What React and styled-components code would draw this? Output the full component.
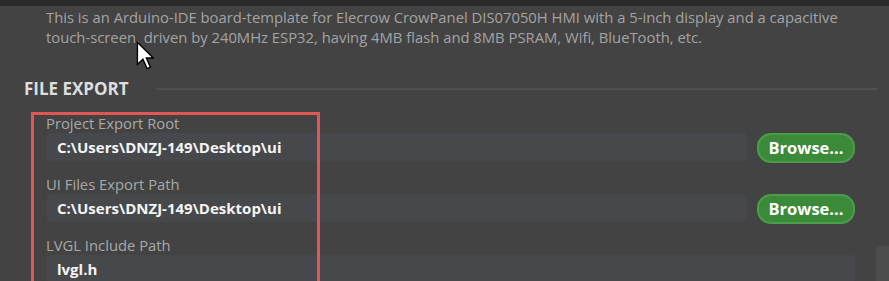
import React from 'react';
import styled, { createGlobalStyle } from 'styled-components';

const fields = [
    { label: 'Project Export Root', value: 'C:\\Users\\DNZJ-149\\Desktop\\ui', browse: true },
    { label: 'UI Files Export Path', value: 'C:\\Users\\DNZJ-149\\Desktop\\ui', browse: true },
    { label: 'LVGL Include Path', value: 'lvgl.h', browse: false }
]

const App = () => {
    return (
        <Page>
            <GlobalStyle />
            <TopBar />
            <Content>
                <Description>
                    This is an Arduino-IDE board-template for Elecrow CrowPanel DIS07050H HMI with a 5-inch display and a capacitive
                    <br />
                    touch-screen, driven by 240MHz ESP32, having 4MB flash and 8MB PSRAM, Wifi, BlueTooth, etc.
                </Description>
                <SectionHeader>
                    <SectionTitle>FILE EXPORT</SectionTitle>
                    <Rule />
                </SectionHeader>
                <Fields>
                    {fields.map(f => (
                        <Field key={f.label}>
                            <Label>{f.label}</Label>
                            <Row>
                                <PathInput>{f.value}</PathInput>
                                {f.browse && <Button>Browse...</Button>}
                            </Row>
                        </Field>
                    ))}
                    <Highlight />
                </Fields>
            </Content>
            <Scrollbar />
            <Cursor viewBox="0 0 13 21">
                <path d="M1 1 L1 17 L5 13.2 L8 20 L10.4 19 L7.5 12.3 L12.5 12.3 Z" fill="#fff" stroke="#000" strokeWidth="1" strokeLinejoin="miter" />
            </Cursor>
        </Page>
    )
}

const GlobalStyle = createGlobalStyle`
    body {
        margin: 0;
        background: #434343;
        overflow: hidden;
        font-family: 'Open Sans', 'Noto Sans', sans-serif;
    }
`;

const Page = styled.div`
    position: relative;
    width: 889px;
    height: 281px;
    overflow: hidden;
    background: #434343;
`;

const TopBar = styled.div`
    height: 6px;
    background: #2a2a2a;
`;

const Content = styled.div`
    padding: 1px 34px 0 24px;
`;

const Description = styled.p`
    margin: 0 0 0 22px;
    font-size: 14.8px;
    line-height: 20px;
    color: #a3a3a3;
    white-space: nowrap;
`;

const SectionHeader = styled.div`
    display: flex;
    align-items: center;
    gap: 27px;
    margin: 32px -22px 0 0;
    height: 20px;
`;

const SectionTitle = styled.div`
    font-size: 17px;
    font-weight: 700;
    color: #dedede;
    line-height: 20px;
`;

const Rule = styled.div`
    flex: 1;
    height: 2px;
    background: #505050;
`;

const Fields = styled.div`
    position: relative;
    display: flex;
    flex-direction: column;
    gap: 11px;
    margin: 14px 0 0 22px;
`;

const Field = styled.div`
    display: flex;
    flex-direction: column;
`;

const Label = styled.div`
    font-size: 14.8px;
    line-height: 20px;
    color: #a8a8a8;
`;

const Row = styled.div`
    display: flex;
    gap: 10px;
    margin-left: 1px;
`;

const PathInput = styled.div`
    flex: 1;
    height: 28px;
    line-height: 28px;
    padding-left: 10px;
    border-radius: 4px;
    background: #47484c;
    color: #f4f4f4;
    font-size: 15px;
    font-weight: 700;
`;

const Button = styled.div`
    width: 94px;
    height: 26px;
    line-height: 25px;
    text-align: center;
    border: 2px solid #4a9e48;
    border-radius: 14px;
    background: #3a8a3a;
    color: #fff;
    font-size: 16.5px;
    font-weight: 700;
`;

const Highlight = styled.div`
    position: absolute;
    left: -15px;
    top: -1px;
    width: 283px;
    height: 200px;
    border: 3px solid #e35656;
`;

const Scrollbar = styled.div`
    position: absolute;
    right: 0;
    top: 246px;
    width: 13px;
    height: 60px;
    border-radius: 4px 0 0 0;
    background: #4d4d4d;
`;

const Cursor = styled.svg`
    position: absolute;
    left: 136px;
    top: 41px;
    width: 18px;
    height: 29px;
`;

export default App;
